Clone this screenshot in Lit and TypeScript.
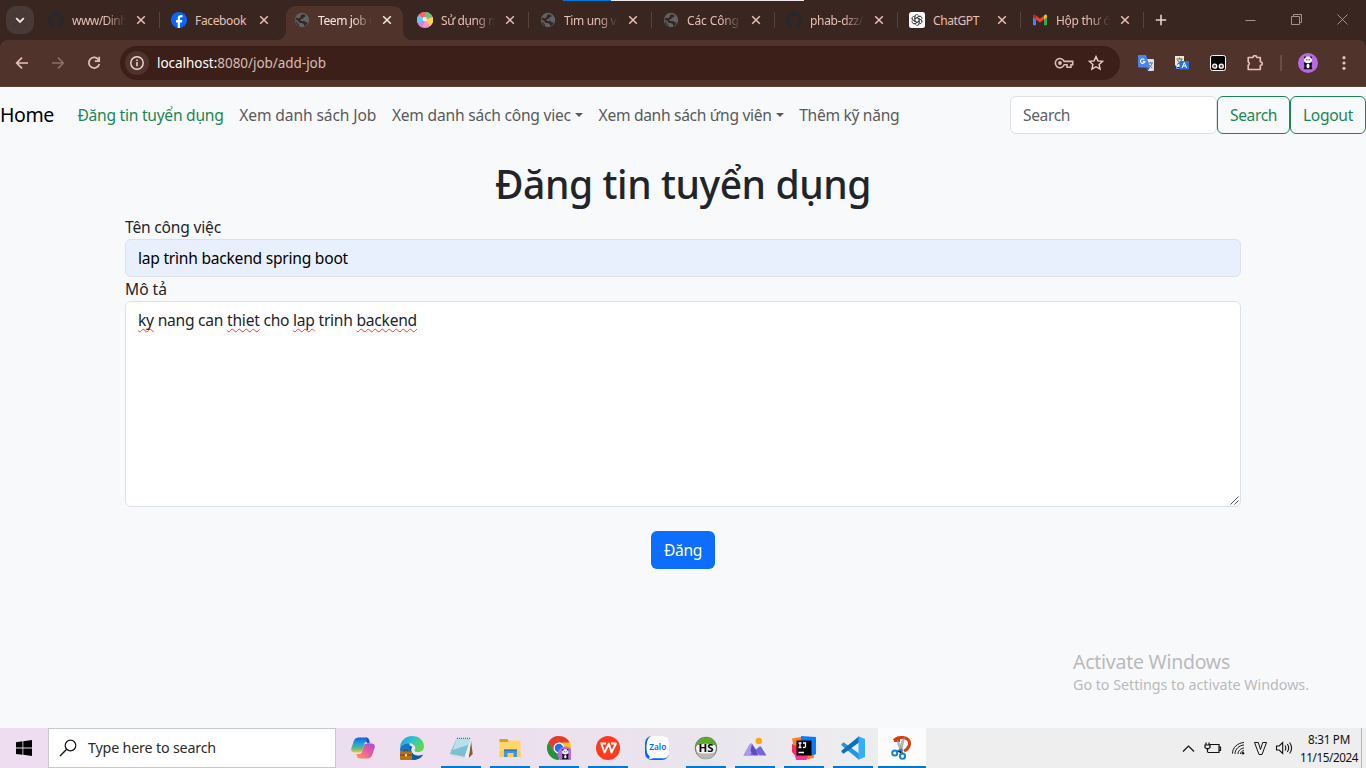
import { LitElement, html, svg, css, nothing } from "lit";
import { customElement, property } from "lit/decorators.js";
import { classMap } from "lit/directives/class-map.js";

/** Text run that spreads its letters over a given width. */
@customElement("fit-text")
class FitText extends LitElement {
  @property({ type: Number }) w = 0;
  static styles = css`
    :host { display: inline-block; white-space: pre; }
    .run { display: inline-block; white-space: pre; }
  `;
  firstUpdated() {
    const run = this.renderRoot.querySelector(".run") as HTMLElement;
    const count = (this.textContent || "").length;
    const natural = run.getBoundingClientRect().width;
    if (this.w && count) {
      run.style.letterSpacing = (this.w - natural) / count + "px";
      this.style.width = this.w + "px";
    }
  }
  render() {
    return html`<span class="run"><slot></slot></span>`;
  }
}

const github = svg`<path fill="#24292f" d="M8 0C3.6 0 0 3.6 0 8c0 3.5 2.3 6.500 5.500 7.600.4.1.5-.2.5-.4v-1.500c-2.200.5-2.700-.9-2.700-.9-.4-.9-.9-1.200-.9-1.200-.7-.5.1-.5.1-.5.8.1 1.200.8 1.200.8.7 1.200 1.900.9 2.300.7.1-.5.3-.9.5-1.100C4.700 11.300 2.900 10.600 2.900 7.500c0-.9.3-1.600.8-2.100-.1-.2-.4-1 .1-2.100 0 0 .7-.2 2.200.8a7.600 7.600 0 0 1 4 0c1.500-1 2.200-.8 2.200-.8.4 1.100.2 1.900.1 2.100.5.6.8 1.300.8 2.100 0 3.100-1.900 3.700-3.700 3.900.3.300.6.800.6 1.500v2.200c0 .2.1.5.6.4A8 8 0 0 0 8 0z"/>`;
const facebook = svg`<circle cx="8" cy="8" r="8" fill="#0866ff"/><path fill="#fff" d="M6.700 15.900v-5.300H5V8h1.700V6.700c0-2.600 1.200-3.700 3.500-3.700.5 0 1 .1 1.300.1v2.200h-.9c-1.200 0-1.600.5-1.600 1.500V8h2.300l-.4 2.600H9v5.300a8 8 0 0 1-2.300 0z"/>`;
const globe = svg`<circle cx="8" cy="8" r="7.200" fill="#5f6368"/><path fill="#392621" d="M8 2.300l3 .4.600 1.700-1.900.9-.5 1.300-2 .4-.9 1.300 1.200.8h3l1.500 1.400 1.900-.3-1.200 2.200-2.400 1.800-.6-2.200L7.500 11H5.800L3.500 8.500 1.800 7.800v1.400l2.600 2.600.9 2C7 14.900 3 13.500 2 10.500c-.9-2.200-.2-4.300.6-4.900l2.200.9 1.600-1.200.4-1.500z"/>`;
const ball = svg`<circle cx="8" cy="8" r="8" fill="#ff8fc5"/><path fill="#ff6464" d="M8 8 1.600 3.200A8 8 0 0 1 9 .06z"/><path fill="#6fbf73" d="M8 8 9 .06A8 8 0 0 1 15.500 5z"/><path fill="#ffd44f" d="M8 8l7.500-3a8 8 0 0 1-2.400 9.100z"/><path fill="#c983e8" d="M8 8 5.500 15.600A8 8 0 0 1 .6 11z"/><path fill="#59c9f5" d="M8 8 .6 11a8 8 0 0 1 1-7.800z"/><circle cx="7.700" cy="7" r="2.200" fill="#ffe9ee"/>`;
const chatgpt = svg`<rect width="16" height="16" rx="2.500" fill="#fff"/><g fill="none" stroke="#333" stroke-width=".75">${[0, 60, 120, 180, 240, 300].map(
  (a) => svg`<path transform="rotate(${a} 8 8)" d="M5.900 9.200V4.700a2.100 2.100 0 0 1 4-.9M5.900 6.800l3.900-2.300a2.100 2.100 0 0 1 2.400.2"/>`)}</g>`;
const gmail = svg`<path fill="#4285f4" d="M1 3.800v9.400h3V6.800z"/><path fill="#34a853" d="M15 3.800v9.400h-3V6.800z"/><path fill="#ea4335" d="M4 3.500 8 6.700l4-3.200v4L8 10.600 4 7.500z"/><path fill="#c5221f" d="M1 4c0-1.700 1.700-2 3-.6v4L1 5.200z"/><path fill="#fbbc04" d="M15 4c0-1.700-1.700-2-3-.6v4l3-2.200z"/>`;

const panda = svg`<circle cx="10" cy="10" r="10" fill="#b66be6"/><path fill="#16131a" d="M5.800 9.500c2-1.500 6.400-1.500 8.400 0l-.5 4 .7 2.800H5.600l.8-2.900z"/><ellipse cx="10" cy="6.800" rx="4" ry="3.400" fill="#f5f5f5"/><path fill="#16131a" d="M6 4.800c0-1.500 1.700-2 2-.7L6.500 5.800zM14 4.800c0-1.500-1.700-2-2-.7l1.500 1.700zM7.600 7l1.600-1 .2 1.500zM12.400 7l-1.600-1-.2 1.500z"/><ellipse cx="10" cy="13" rx="1.500" ry="2.200" fill="#fff"/>`;

interface Tab { title: string; icon: unknown; w: number; active?: boolean; line?: boolean; }
const tabs: Tab[] = [
  { title: "www/Dinh", icon: github, w: 55, line: true },
  { title: "Facebook", icon: facebook, w: 51 },
  { title: "Teem job u", icon: globe, w: 58, active: true },
  { title: "Sử dụng m", icon: ball, w: 58, line: true },
  { title: "Tim ung vi", icon: globe, w: 55, line: true },
  { title: "Các Công t", icon: globe, w: 59, line: true },
  { title: "phab-dzz/", icon: github, w: 53, line: true },
  { title: "ChatGPT", icon: chatgpt, w: 46, line: true },
  { title: "Hộp thư đế", icon: gmail, w: 61, line: true },
];

interface App { icon: unknown; name: string; running?: boolean; active?: boolean; }
const apps: App[] = [
  { name: "Copilot", icon: svg`
    <defs>
      <linearGradient id="ca" x1="0" y1="0" x2="0" y2="1"><stop offset="0" stop-color="#1b5fd9"/><stop offset=".4" stop-color="#18a5e0"/><stop offset=".7" stop-color="#55b98a"/><stop offset="1" stop-color="#f0c927"/></linearGradient>
      <linearGradient id="cb" x1="1" y1="0" x2="0" y2="1"><stop offset="0" stop-color="#a04be0"/><stop offset=".5" stop-color="#e8609a"/><stop offset="1" stop-color="#ff9a4a"/></linearGradient>
    </defs>
    <path fill="url(#ca)" d="M8 1.500h7c2 0 2.600 1.200 3 2.500l.6 2h-2.800c-1.500 0-2.300.8-2.700 2.200l-1.700 5.600c-.6 2-1.500 2.700-3.200 2.700H3.400C.8 16.500-.3 14.500.4 12L2.800 5C3.600 2.500 5.500 1.500 8 1.500z"/>
    <path fill="url(#cb)" d="M16 22.500H9c-2 0-2.600-1.200-3-2.500l-.6-2h2.800c1.500 0 2.300-.8 2.700-2.200l1.700-5.600c.6-2 1.500-2.700 3.200-2.700h4.800c2.600 0 3.700 2 3 4.500L21.200 19c-.8 2.500-2.700 3.500-5.200 3.500z"/>
    <path fill="#1d4fc4" d="M14.500 1.500c2.300 0 3 1.200 3.500 2.500l.8 3.200-2.500.1c-1-2-.2-5-1.800-5.800z"/>` },
  { name: "Edge", icon: svg`
    <defs><linearGradient id="ea" x1="0" y1="0" x2="1" y2=".5"><stop offset="0" stop-color="#1b9de2"/><stop offset=".5" stop-color="#2cc3d0"/><stop offset="1" stop-color="#62d949"/></linearGradient></defs>
    <path fill="#0c59a4" d="M1 10c-1 8 5 14 12.500 14 4.500 0 8-2.300 9.700-5.500-4 2-10.700 1.200-11.700-3.500-.4-2.700 1-4 1-4L7 8z"/>
    <path fill="url(#ea)" d="M0 12C0 5 5.500 0 12 0c7.500 0 12 5 12 10.200 0 4-3 6-6.200 6-2.800 0-4-1-3.600-1.800.5-.8 1-1.400 1-2.600 0-2-2.200-4.500-5.700-4.500C5 7.300 1 8.800 0 12z"/>
    <path fill="#1479c9" d="M9.500 7.300c-5 0-8.700 2-9.500 5.500 0 3 1 5 1 5h9z"/>
    <path fill="#eee4ef" d="M11.700 12c.5-1.700 3-2 3.500-.4.3 1.200-.9 2-.9 2.900.2 1.500 3.500 2 6 1.300l3 .3-1.500 2.700c-4.500 1.200-9.700-.5-10.200-4z"/>
    <rect x="0" y="15.500" width="12" height="8.500" rx="1" fill="#b5701b"/><path fill="#704008" d="M3.700 15.500v-2h4.600v2h-1v-1H4.700v1zM0 18.500h12v1H0z"/><rect x="5" y="18" width="2" height="2.500" fill="#ffd44f"/>` },
  { name: "Notepad", running: true, icon: svg`
    <path fill="#81602e" d="M22 4l1.700 14-4 4z"/><path fill="#e9eef0" d="M8 2.500h14.500L19.500 22 16 22z"/>
    <path fill="#7cbfd0" d="M7.500 2.500h14L15.500 21 .8 18z"/><path fill="#b9e0e9" d="M7.500 2.500h14l-2 6.200L3.800 14z"/><path fill="#d6dfe2" d="M.8 18l14.700 3 .5 1.600L1.600 20z"/>
    <path stroke="#555e63" stroke-width="1" stroke-dasharray="1 1" d="M8 2.300h14"/>` },
  { name: "File Explorer", running: true, icon: svg`
    <path fill="#d9a01c" d="M1.500 3h8l1.500 3H1.500z"/><path fill="#ffd768" d="M1.500 6h9.300l1.300-1.500h10.400V21h-21z"/><path fill="#f9cf59" d="M1.500 15h21v6h-21z"/>
    <path fill="#3f97dc" d="M6 13.500h13V21h-3.500v-4h-6v4H6z"/><path fill="#2c79bd" d="M6 13.500h13v1.600H6z"/>` },
  { name: "Chrome", running: true, icon: svg`
    <circle cx="12" cy="12" r="12" fill="#fbc116"/><path fill="#229342" d="M1.600 6A12 12 0 0 0 11.500 24L17 14.500 7 15z"/><path fill="#e33b2e" d="M12 6.500h10.600A12 12 0 0 0 1.600 6l5.200 9z"/>
    <circle cx="12" cy="12" r="5.500" fill="#fff"/><circle cx="12" cy="12" r="4.300" fill="#1a73e8"/><g transform="translate(10.500 10.500) scale(.78)">${panda}</g>` },
  { name: "WPS Office", running: true, icon: svg`
    <circle cx="12" cy="12" r="12" fill="#ff3b1f"/><path fill="none" stroke="#fff" stroke-width="1.900" stroke-linejoin="round" d="M4.500 7.500H10M5.200 7.500l3.400 9 4.300-9 2.600 9 4.500-9h-5"/>` },
  { name: "Zalo", icon: svg`
    <rect width="24" height="24" rx="7" fill="#0068ff"/><path fill="#fff" d="M6 0h12.500A5.500 5.500 0 0 1 24 5.500v12a5 5 0 0 1-5.500 4.700H8c-1.600.8-3.800.8-4.500.4 1-.7 1.300-1.700 1.100-2.700C2 18.500 1.500 15 1.500 11S2.500 2 6 0z"/>
    <text x="12.800" y="13.700" font-size="8" font-weight="600" text-anchor="middle" fill="#0068ff" font-family="Noto Sans, sans-serif" textLength="17" lengthAdjust="spacingAndGlyphs">Zalo</text>` },
  { name: "HeidiSQL", running: true, icon: svg`
    <circle cx="12" cy="12" r="10.600" fill="#f4f4f2" stroke="#777" stroke-width="1.200"/><path fill="#58ad23" d="M1.800 10a10.400 10.400 0 0 1 20.400 0C17 7 7 7 1.800 10z"/><path fill="#b8b8b4" d="M2.500 16a10 10 0 0 0 19 0c-5 2-14 2-19 0z"/>
    <text x="12" y="16" font-size="11" font-weight="700" text-anchor="middle" fill="#080808" font-family="Noto Sans, sans-serif" textLength="15" lengthAdjust="spacingAndGlyphs">HS</text>` },
  { name: "Mountain", running: true, icon: svg`
    <circle cx="15.800" cy="5" r="3.200" fill="#ffa514"/><path fill="#7466d8" d="M.5 19.500 7 8q1-1 2 0l4 5.500 3.500-3q.8-.7 1.600.3l5.400 8.700h-7L12 15l-2 4.500z"/><path fill="#a99af2" d="M.5 19.500 7 8q1-1 2 0l1.500 3-3.500 8.500z"/><path fill="#5b4cc4" d="M9 8l6.500 11.500h-5l-3-5z"/>` },
  { name: "IntelliJ IDEA", running: true, icon: svg`
    <path fill="#fc801d" d="M0 2.500 9 1l5 10L4 22z"/><path fill="#fe2857" d="M0 8v8l7 8 11-1-6-9z"/><path fill="#087cfa" d="M9 0l15 1v17l-6 3L9 8z"/><path fill="#ff318c" d="M2 14 4 24h10l4-4z"/><path fill="#fc801d" d="M16 19.500h6V22l-7 1z"/>
    <rect x="4.500" y="4.500" width="15" height="15" fill="#000"/><path stroke="#fff" stroke-width="1.300" fill="none" d="M6.500 7h3M8 7v4.500M6.500 11.500h3M11 7h2.500v3.200c0 1-.7 1.500-2.500 1.200M6.500 16.500h5.500"/>` },
  { name: "VS Code", running: true, icon: svg`
    <path fill="#2196e3" d="M.3 8.200 2.500 6.300 18 17.500v6.200L1 9.800z"/><path fill="#0e70b8" d="M.3 15.800 2.500 17.700 18 6.500V.3L1 14.200z"/><path fill="#36aef5" d="M17.500.3 24 3v18l-6.500 2.700z"/>` },
  { name: "Snipping Tool", running: true, active: true, icon: svg`
    <path fill="none" stroke="#d3410f" stroke-width="3" d="M4 4.500C7 .8 15 .5 18 3.500c3 3.300 1.500 9-4 11.500M4 4.500h6"/><path fill="#bdc3c7" stroke="#8b9499" stroke-width=".6" d="M7.500 4 13 14.500l-1.500 2L8 9zM14.500 1.500 11.500 16l-2-1.500 2-9z"/>
    <circle cx="4.700" cy="17" r="2.500" fill="none" stroke="#1683cc" stroke-width="2"/><circle cx="12.500" cy="20.200" r="2.600" fill="none" stroke="#1683cc" stroke-width="2"/><path stroke="#1683cc" stroke-width="1.800" d="M6.500 15.500 11 13.500l1.300 4"/>` },
];

@customElement("browser-chrome")
class BrowserChrome extends LitElement {
  static styles = css`
    :host { display: block; position: relative; background: #392621; color: #e7c0b6; font: 12px/16px "Noto Sans", sans-serif; height: 87px; }
    .edge { position: absolute; top: 0; left: 563px; width: 241px; height: 1px; background: linear-gradient(90deg, #0078d7 48px, #efe9ed 48px); }
    .strip { display: flex; height: 40px; align-items: flex-start; }
    .chevron { width: 28px; height: 28px; margin: 6px 3px 0 6px; border-radius: 10px; background: #493936; flex: none; }
    .tab { box-sizing: border-box; width: 123px; height: 28px; margin-top: 6px; padding-left: 11px; display: flex; align-items: center; position: relative; flex: none; }
    .tab.line { background: linear-gradient(#54413c, #54413c) 122px 6px / 2px 16px no-repeat; }
    .tab.active { color: #fbe9e4; }
    .shape { position: absolute; left: -6px; top: 0; z-index: 0; }
    .fav { width: 16px; height: 16px; flex: none; position: relative; }
    .title { width: 54px; margin-left: 8px; white-space: pre; font-size: 12px; position: relative; top: 1px; -webkit-mask-image: linear-gradient(90deg, #000 34px, transparent 54px); }
    .title.whole { -webkit-mask-image: none; }
    .x { width: 10px; height: 10px; margin-left: 10px; position: relative; flex: none; }
    .plus { width: 12px; height: 12px; margin: 14px 0 0 11px; flex: none; }
    .controls { display: flex; margin: 14px 18px 0 auto; gap: 35px; }
    .controls svg { width: 11px; height: 11px; display: block; }
    .bar { height: 47px; box-sizing: border-box; background: #50342c; border-bottom: 1px solid #5c433c; border-radius: 8px 8px 0 0; display: flex; align-items: center; padding: 0 14px; }
    .bar > svg { flex: none; }
    .nav { width: 16px; height: 16px; margin-right: 20px; }
    .nav.last { margin-right: 18px; }
    .address { width: 1000px; height: 34px; border-radius: 17px; background: #3b1f18; display: flex; align-items: center; box-sizing: border-box; padding: 0 16px 0 5px; flex: none; font-size: 13.500px; color: #d6bdb6; margin-bottom: 1px; }
    .info { width: 24px; height: 24px; margin-right: 8px; flex: none; }
    .host { color: #fff; }
    .key { width: 20px; height: 16px; margin-left: auto; margin-right: 14px; }
    .star { width: 16px; height: 16px; }
    .ext { width: 16px; height: 16px; margin-left: 20px; }
    .ext.first { margin-left: 18px; }
    .ext.puzzle { margin-left: 21px; }
    .sep { width: 2px; height: 16px; background: #6f4c43; margin: 0 16px 0 17px; }
    .more { margin-left: 24px; }
  `;
  render() {
    return html`
      <div class="strip">
        <svg class="chevron" viewBox="0 0 28 28"><path d="M10.200 12.200 14 16l3.800-3.800" fill="none" stroke="#f4e6e2" stroke-width="1.900"/></svg>
        ${tabs.map((t) => html`
          <div class=${classMap({ tab: true, active: !!t.active, line: !!t.line })}>
            ${t.active ? html`<svg class="shape" width="133" height="34" viewBox="0 0 133 34"><path fill="#50342c" d="M0 34a9 9 0 0 0 9-9V10A10 10 0 0 1 19 0h97a10 10 0 0 1 10 10v15a9 9 0 0 0 7 9z"/></svg>` : nothing}
            <svg class="fav" viewBox="0 0 16 16">${t.icon}</svg>
            <div class=${classMap({ title: true, whole: t.w < 52 })}><fit-text w=${t.w}>${t.title}</fit-text></div>
            <svg class="x" viewBox="0 0 10 10"><path d="M1.200 1.200l7.600 7.600M8.800 1.200 1.200 8.800" stroke=${t.active ? "#fbe9e4" : "#e7c0b6"} stroke-width="1.500"/></svg>
          </div>`)}
        <svg class="plus" viewBox="0 0 12 12"><path d="M6 .8v10.400M.8 6h10.400" stroke="#e9d2cb" stroke-width="1.600"/></svg>
        <div class="controls">
          <svg viewBox="0 0 11 11"><path d="M.5 6.500h10" stroke="#a0928e"/></svg>
          <svg viewBox="0 0 11 11"><path d="M.5 2.500h8v8h-8zM2.500 2.500v-2h8v8h-2" fill="none" stroke="#a0928e"/></svg>
          <svg viewBox="0 0 11 11"><path d="M.5.5l10 10M10.500.5l-10 10" stroke="#a0928e"/></svg>
        </div>
      </div>
      <div class="bar">
        <svg class="nav" viewBox="0 0 16 16"><path d="M14 8H3M8 2.700 2.700 8 8 13.300" fill="none" stroke="#e7c0b6" stroke-width="1.700"/></svg>
        <svg class="nav" viewBox="0 0 16 16"><path d="M2 8h11M8 2.700 13.300 8 8 13.300" fill="none" stroke="#8b6d65" stroke-width="1.700"/></svg>
        <svg class="nav last" viewBox="0 0 16 16"><path d="M12.700 5A5.300 5.300 0 1 0 13.300 9" fill="none" stroke="#e7c0b6" stroke-width="1.700"/><path d="M13.200 1.800V6.200H8.800" fill="none" stroke="#e7c0b6" stroke-width="1.700"/></svg>
        <div class="address">
          <svg class="info" viewBox="0 0 24 24"><circle cx="12" cy="12" r="12" fill="#50342c"/><circle cx="12" cy="12" r="6.200" fill="none" stroke="#f1dcd6" stroke-width="1.400"/><path d="M12 11v4.200M12 8.400v1.500" stroke="#f1dcd6" stroke-width="1.500"/></svg>
          <fit-text w="169"><span class="host">localhost:</span>8080/job/add-job</fit-text>
          <svg class="key" viewBox="0 0 20 16"><path d="M10.200 6.400A4.600 4.600 0 1 0 10.200 9.800H13v2.400h4V9.800h1.700V6.400z" fill="none" stroke="#dcbdb4" stroke-width="1.600"/><circle cx="6" cy="8" r="1.900" fill="#dcbdb4"/></svg>
          <svg class="star" viewBox="0 0 16 16"><path d="M8 1.600l1.900 4.300 4.700.5-3.500 3.100 1 4.600L8 11.700l-4.100 2.400 1-4.600L1.400 6.400l4.700-.5z" fill="none" stroke="#ecd2ca" stroke-width="1.400"/></svg>
        </div>
        <svg class="ext first" viewBox="0 0 16 16"><path fill="#dfe2e5" d="M7 4h8q1 0 1 1v10q0 1-1 1h-5z"/><path fill="#4b85e8" d="M1 0h7l4 12.500H1q-1 0-1-1V1q0-1 1-1z"/><path fill="#2b5bc4" d="M7.500 12.500H12L9.700 16z"/><path d="M6.300 4.700a2.200 2.200 0 1 0 .5 1.900H4.700" fill="none" stroke="#fff" stroke-width="1.100"/><path d="M10 8h5M12.500 7v1M14 8q-1 4-3 5M11 9.500q1 2 3.300 3.500" fill="none" stroke="#65727f" stroke-width=".9"/></svg>
        <svg class="ext" viewBox="0 0 16 16"><path fill="#e9eadf" d="M1 1h9v11H3L1 10z"/><path d="M2.500 4h6M5.500 2.500V4M8 4Q7 8 3 9.500M3.500 5q1 3 4 4" fill="none" stroke="#5b625c"/><rect x="5.500" y="6" width="9.500" height="8.500" fill="#2a72df"/><path d="M8 13l2.300-5.500 2.300 5.500M9 11h2.700" fill="none" stroke="#fff" stroke-width="1"/><path d="M2.500 11v2.500H5" fill="none" stroke="#73a9f4"/></svg>
        <svg class="ext" viewBox="0 0 16 16"><rect x=".5" y=".5" width="15" height="15" rx="2" fill="#050505" stroke="#fff"/><circle cx="4.700" cy="11.200" r="2" fill="#7c3d3d" stroke="#fff" stroke-width="1.300"/><circle cx="11.300" cy="11.200" r="2" fill="#7c3d3d" stroke="#fff" stroke-width="1.300"/></svg>
        <svg class="ext puzzle" viewBox="0 0 16 16"><path d="M1.200 2.500H6a1.900 1.900 0 0 1 3.800 0h3.500v4.200a1.900 1.900 0 0 1 0 3.800v4H1.200v-4.200a2 2 0 0 0 0-3.600z" fill="none" stroke="#e7c0b6" stroke-width="1.600" stroke-linejoin="round"/></svg>
        <div class="sep"></div>
        <svg width="20" height="20" viewBox="0 0 20 20">${panda}</svg>
        <svg class="more" width="4" height="16" viewBox="0 0 4 16"><g fill="#e7c0b6"><circle cx="2" cy="2.700" r="1.600"/><circle cx="2" cy="8" r="1.600"/><circle cx="2" cy="13.300" r="1.600"/></g></svg>
      </div>
      <div class="edge"></div>`;
  }
}

@customElement("job-page")
class JobPage extends LitElement {
  static styles = css`
    :host { display: block; flex: 1; background: #f8f9fb; color: #212529; font: 15.600px/24px "Noto Sans", sans-serif; }
    .navbar { display: flex; align-items: center; height: 56px; color: #595a5c; }
    .brand { font-size: 19.500px; color: #000; margin-right: 23.500px; }
    .links { display: flex; gap: 15.700px; }
    .current { color: #198754; }
    .drop { display: flex; align-items: center; gap: 4px; }
    .caret { border: 4.500px solid transparent; border-top-color: currentColor; border-bottom: 0; }
    .search { display: flex; margin-left: auto; }
    .field { box-sizing: border-box; height: 38px; border: 1px solid #dee2e6; border-radius: 6px; background: #fff; padding: 6px 12px; }
    .find { width: 207px; color: #5b6168; }
    .outline { box-sizing: border-box; height: 38px; border: 1px solid #198754; border-radius: 6px; color: #198754; padding: 6px 12px; }
    .form { width: 1116px; margin: 17px auto 0; display: flex; flex-direction: column; }
    h1 { margin: 0 0 7px; font: 500 39px/48px "Noto Sans", sans-serif; height: 48px; text-align: center; }
    label { height: 24px; }
    .filled { background: #e8f0fe; color: #000; }
    .area { height: 206px; position: relative; }
    .bad { text-decoration: underline wavy #f33 1px; text-underline-offset: 2px; text-decoration-skip-ink: none; }
    .grip { position: absolute; right: 1px; bottom: 1px; width: 9px; height: 9px; }
    .post { align-self: center; margin-top: 24px; box-sizing: border-box; width: 64px; height: 38px; border-radius: 6px; background: #0d6efd; color: #fff; padding: 7px 13px; }
  `;
  render() {
    return html`
      <nav class="navbar">
        <fit-text class="brand" w="54">Home</fit-text>
        <div class="links">
          <fit-text class="current" w="146">Đăng tin tuyển dụng</fit-text>
          <fit-text w="137">Xem danh sách Job</fit-text>
          <span class="drop"><fit-text w="179">Xem danh sách công viec</fit-text><i class="caret"></i></span>
          <span class="drop"><fit-text w="173">Xem danh sách ứng viên</fit-text><i class="caret"></i></span>
          <fit-text w="100">Thêm kỹ năng</fit-text>
        </div>
        <div class="search">
          <div class="field find"><fit-text w="47">Search</fit-text></div>
          <div class="outline"><fit-text w="47">Search</fit-text></div>
          <div class="outline"><fit-text w="50">Logout</fit-text></div>
        </div>
      </nav>
      <div class="form">
        <h1><fit-text w="376">Đăng tin tuyển dụng</fit-text></h1>
        <label><fit-text w="96">Tên công việc</fit-text></label>
        <div class="field filled"><fit-text w="210">lap trình backend spring boot</fit-text></div>
        <label><fit-text w="42">Mô tả</fit-text></label>
        <div class="field area">
          <fit-text w="279"><span class="bad">ky</span> nang can <span class="bad">thiet</span> cho <span class="bad">lap</span> trinh <span class="bad">backend</span></fit-text>
          <svg class="grip" viewBox="0 0 9 9"><path d="M.5 8.500l8-8M4.500 8.500l4-4" stroke="#555" stroke-width="1"/></svg>
        </div>
        <div class="post"><fit-text w="38">Đăng</fit-text></div>
      </div>`;
  }
}

@customElement("task-bar")
class TaskBar extends LitElement {
  static styles = css`
    :host { display: flex; height: 40px; background: linear-gradient(90deg, #eedcf0 0, #ecdfee 500px, #eae6ed 720px, #eeeeee 900px, #eeeeee 100%); color: #111; font: 14.300px/20px "Noto Sans", sans-serif; }
    .start { width: 48px; height: 40px; flex: none; }
    .search { width: 288px; box-sizing: border-box; border: 1px solid #c8c8c8; background: #fff; display: flex; align-items: center; padding-left: 10px; gap: 11px; margin-right: 3px; flex: none; color: #2b2b2b; }
    .app { width: 48px; height: 40px; margin-right: 1px; display: flex; justify-content: center; align-items: center; flex: none; }
    .app svg { width: 24px; height: 24px; }
    .running { background: linear-gradient(#0078d7, #0078d7) 4px 38px / 40px 2px no-repeat; }
    .active { background: linear-gradient(#0078d7, #0078d7) 0 38px / 48px 2px no-repeat #fcfcfc; }
    .tray { display: flex; align-items: center; margin-left: auto; }
    .clock { display: flex; flex-direction: column; align-items: center; width: 58px; margin: 0 0 1px 6px; font-size: 11.700px; line-height: 18px; }
    .show { width: 4px; border-left: 1px solid #b8b8b8; margin-left: 3px; align-self: stretch; }
  `;
  render() {
    return html`
      <svg class="start" viewBox="0 0 48 40"><path d="M16 14.200l6.500-.9v6.300H16zM23.300 13.200 32 12v7.600h-8.700zM16 20.500h6.500v6.300l-6.500-.9zM23.300 20.500H32V28l-8.700-1.200z"/></svg>
      <div class="search">
        <svg width="18" height="18" viewBox="0 0 18 18"><circle cx="11.500" cy="6.500" r="5.300" fill="none" stroke="#111" stroke-width="1.200"/><path d="M7.700 10.300 1 17" stroke="#111" stroke-width="1.300"/></svg>
        <fit-text w="128">Type here to search</fit-text>
      </div>
      ${apps.map((a) => html`<div class=${classMap({ app: true, running: !!a.running, active: !!a.active })}><svg viewBox="0 0 24 24" role="img" aria-label=${a.name}>${a.icon}</svg></div>`)}
      <div class="tray">
        <svg width="112" height="20" viewBox="0 0 112 20" fill="none" stroke="#111" stroke-width="1.200">
          <path d="M1 13.500 6.500 8l5.500 5.500"/>
          <path d="M27.500 6.500H37v8H26M37 9h1.500v3.500H37M24 4.500v2.500M27 4.500v2.500M23 7h5v2.500l-1.500 1.200h-2L23 9.500zM25.500 10.700v3.800"/>
          <path stroke-width="1" d="M50.500 15.500c0-6 5-10.500 11.500-11M53 16c0-5 4-8.500 9-9M56 16c0-3.300 2.700-5.600 6-6M58.500 16c0-1.800 1.500-3.200 3.500-3.400"/><circle cx="61" cy="15.200" r="1.200" fill="#111" stroke="none"/>
          <path stroke-width="1" d="M72.500 4.500h3.800l2.200 7 2.200-7h3.800L80 16.500h-3z"/>
          <path stroke-width="1.100" d="M94.500 8h2.700l3.500-3.500v11L97.200 12h-2.700zM103 7.500q1.700 2.500 0 5M105.300 6q2.800 4 0 8M107.600 4.500q4 5.500 0 11"/>
        </svg>
        <div class="clock"><fit-text w="42">8:31 PM</fit-text><fit-text w="58">11/15/2024</fit-text></div>
        <div class="show"></div>
      </div>`;
  }
}

@customElement("app-root")
class AppRoot extends LitElement {
  static styles = css`
    :host { display: flex; flex-direction: column; width: 1366px; height: 768px; overflow: hidden; position: relative; }
    .notice { position: absolute; left: 1073px; top: 649px; color: #b9babc; font: 14.300px/20px "Noto Sans", sans-serif; display: flex; flex-direction: column; }
    .big { font-size: 19.500px; line-height: 26px; }
  `;
  render() {
    return html`
      <browser-chrome></browser-chrome>
      <job-page></job-page>
      <task-bar></task-bar>
      <div class="notice"><fit-text class="big" w="157">Activate Windows</fit-text><fit-text w="236">Go to Settings to activate Windows.</fit-text></div>`;
  }
}
